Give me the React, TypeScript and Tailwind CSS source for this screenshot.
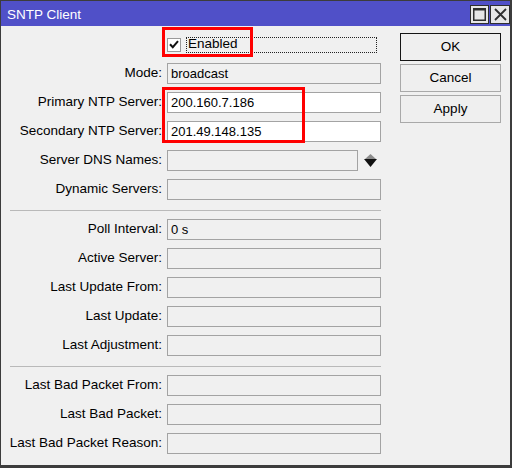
import React from "react"

type Row = { label: string; value?: string; white?: boolean; narrow?: boolean }

const top: Row[] = [
  { label: "Mode:", value: "broadcast" },
  { label: "Primary NTP Server:", value: "200.160.7.186", white: true },
  { label: "Secondary NTP Server:", value: "201.49.148.135", white: true },
  { label: "Server DNS Names:", narrow: true },
  { label: "Dynamic Servers:" },
]

const status: Row[] = [
  { label: "Poll Interval:", value: "0 s" },
  { label: "Active Server:" },
  { label: "Last Update From:" },
  { label: "Last Update:" },
  { label: "Last Adjustment:" },
]

const bad: Row[] = [
  { label: "Last Bad Packet From:" },
  { label: "Last Bad Packet:" },
  { label: "Last Bad Packet Reason:" },
]

function UpDown() {
  return (
    <svg width="13" height="14" viewBox="0 0 13 14" className="ml-[6px]">
      <polygon points="6.5,0 12,5 1,5" fill="#8c8c8c" />
      <polygon points="0,5 13,5 6.5,13" fill="#111" />
    </svg>
  )
}

function Field({ row }: { row: Row }) {
  return (
    <>
      <div className="flex h-[21px] items-center justify-end whitespace-nowrap text-[13.5px] text-black">
        {row.label}
      </div>
      <div className="flex h-[21px] items-center">
        <div
          className={
            "flex h-[21px] items-center border border-[#a3a3a3] pl-[3px] text-[13px] text-black " +
            (row.white ? "bg-white " : "bg-[#f0f0f0] ") +
            (row.narrow ? "w-[191px]" : "w-[214px]")
          }
        >
          {row.value}
        </div>
        {row.narrow && <UpDown />}
      </div>
    </>
  )
}

function Separator() {
  return <div className="col-span-2 mt-[2px] h-px bg-[#b9b9b9]" />
}

function Button({ label, primary }: { label: string; primary?: boolean }) {
  return (
    <button
      type="button"
      className={
        "flex h-[28px] w-[101px] items-center justify-center bg-[#efefef] text-[13.5px] text-black " +
        (primary ? "border-[1.5px] border-[#151515]" : "border border-[#a9a9a9]")
      }
    >
      {label}
    </button>
  )
}

export default function App() {
  return (
    <div className="relative flex h-[468px] w-[512px] flex-col border-b-[3px] border-l border-r-2 border-t border-[#3c3c3c] bg-[#f0f0f0] font-['Liberation_Sans',Arial,sans-serif]">
      {/* title bar */}
      <div className="flex h-[25px] items-start bg-[#5050c8]">
        <span className="ml-[6px] mt-[6px] text-[13.5px] leading-[16px] text-white">SNTP Client</span>
        <div className="ml-auto mt-[4px] flex gap-px">
          <div className="flex h-[19px] w-[19px] items-center justify-center border border-[#2e2e2e] bg-[#e6e6e6]">
            <svg width="13" height="13" viewBox="0 0 13 13">
              <rect x="0.75" y="0.75" width="11.5" height="11.5" fill="none" stroke="#2e2e2e" strokeWidth="1.5" />
              <rect x="0" y="0" width="13" height="2.5" fill="#2e2e2e" />
            </svg>
          </div>
          <div className="flex h-[19px] w-[20px] items-center justify-center border border-[#2e2e2e] bg-[#e6e6e6]">
            <svg width="13" height="13" viewBox="0 0 13 13">
              <path d="M1 1 L12 12 M12 1 L1 12" stroke="#2e2e2e" strokeWidth="1.8" />
            </svg>
          </div>
        </div>
      </div>

      {/* body */}
      <div className="flex">
        <div className="grid grid-cols-[152px_214px] gap-x-[5px] gap-y-[8px] pl-[9px] pt-[8px]">
          <div className="h-[21px]" />
          <div className="flex h-[21px] items-center">
            <div className="flex h-[14px] w-[14px] items-center justify-center border border-[#9a9a9a] bg-white">
              <svg width="10" height="9" viewBox="0 0 10 9">
                <path d="M1 4.2 L3.8 7.2 L9 1.2" fill="none" stroke="#111" strokeWidth="2" />
              </svg>
            </div>
            <div className="ml-[5px] mr-[4px] flex h-[16px] flex-1 items-center border border-dotted border-[#222] pl-px text-[13.5px] text-black">
              Enabled
            </div>
          </div>
          {top.map((r) => (
            <Field key={r.label} row={r} />
          ))}
          <Separator />
          {status.map((r) => (
            <Field key={r.label} row={r} />
          ))}
          <Separator />
          {bad.map((r) => (
            <Field key={r.label} row={r} />
          ))}
        </div>
        <div className="ml-[19px] flex flex-col gap-[3px] pt-[7px]">
          <Button label="OK" primary />
          <Button label="Cancel" />
          <Button label="Apply" />
        </div>
      </div>

      {/* red annotations */}
      <div className="pointer-events-none absolute left-[161px] top-[26px] h-[30px] w-[91px] border-[3px] border-[#ff0000]" />
      <div className="pointer-events-none absolute left-[161px] top-[86px] h-[56px] w-[143px] border-[3px] border-[#ff0000]" />
    </div>
  )
}
